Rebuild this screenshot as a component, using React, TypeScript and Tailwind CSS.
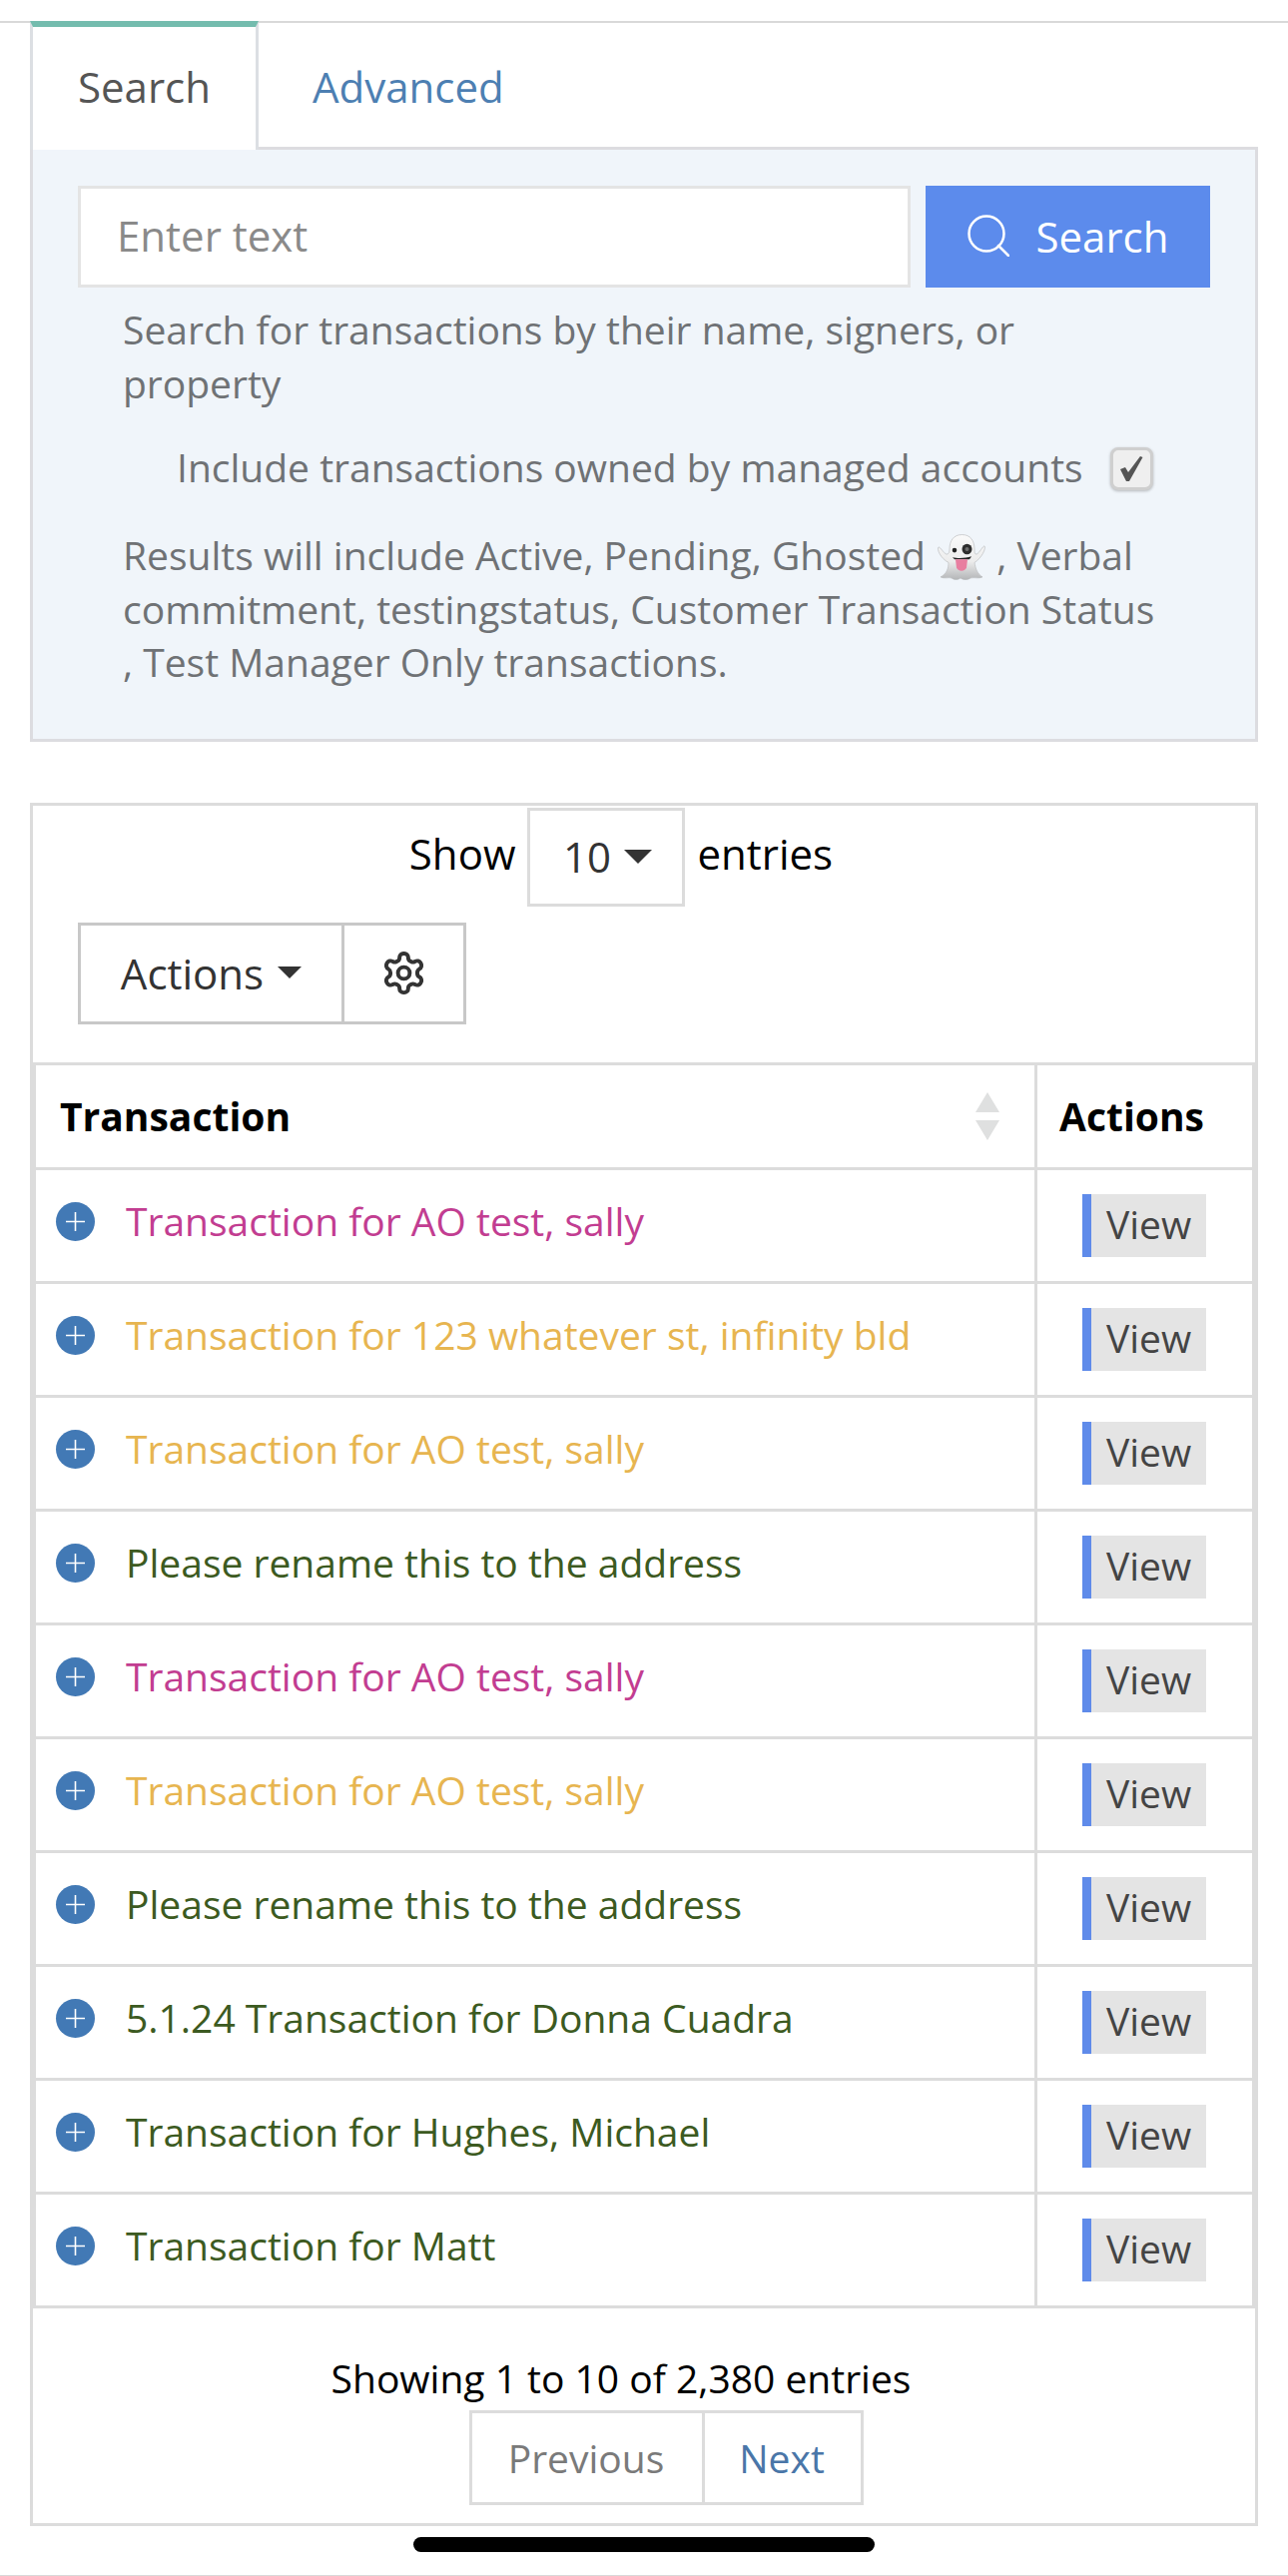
const font = { fontFamily: '"Open Sans", sans-serif' };

const rows: { label: string; color: string }[] = [
  { label: "Transaction for AO test, sally", color: "text-[#c23d91]" },
  { label: "Transaction for 123 whatever st, infinity bld", color: "text-[#e7b550]" },
  { label: "Transaction for AO test, sally", color: "text-[#e7b550]" },
  { label: "Please rename this to the address", color: "text-[#3c5a21]" },
  { label: "Transaction for AO test, sally", color: "text-[#c23d91]" },
  { label: "Transaction for AO test, sally", color: "text-[#e7b550]" },
  { label: "Please rename this to the address", color: "text-[#3c5a21]" },
  { label: "5.1.24 Transaction for Donna Cuadra", color: "text-[#3c5a21]" },
  { label: "Transaction for Hughes, Michael", color: "text-[#3c5a21]" },
  { label: "Transaction for Matt", color: "text-[#3c5a21]" },
];

function Ghost() {
  return (
    <svg width="49" height="46" viewBox="-1 -0.5 49 44.5" preserveAspectRatio="none" className="inline-block align-[-10px] mx-[1px]">
      <defs>
        <linearGradient id="ghostFill" x1="0" y1="0" x2="0" y2="1">
          <stop offset="0" stopColor="#fafafa" />
          <stop offset="0.6" stopColor="#ececec" />
          <stop offset="1" stopColor="#b4b6b8" />
        </linearGradient>
      </defs>
      <path
        d="M24.5 0C16 0 12 6 12 14c0 3-1 5-3 5-3-1-6-7-8-7-2 2 2 11 10 15 0 6-2 11-8 14 4 2 8 0 11 1 3 2 6 2 9 0 3 2 7 2 10 0 4-1 8 1 12-1-5-3-7-8-8-14 7-4 12-14 10-16-2 0-5 7-8 8-2 0-2-2-2-5 0-8-4-14-12.500-14z"
        fill="url(#ghostFill)"
        stroke="#b5b6b8"
        strokeWidth="0.6"
      />
      <circle cx="17" cy="15" r="2.3" fill="#222" />
      <circle cx="29.500" cy="14" r="5" fill="#2e2e2e" />
      <circle cx="29.500" cy="14" r="2" fill="#6f6f6f" />
      <path d="M15 22c5 1 13 1 19-1-1 2-2 3-3 3H18c-1 0-2-1-3-2z" fill="#222" />
      <path d="M18 24h12l-1 8c-1 4-9 4-10 0z" fill="#e87ea0" />
    </svg>
  );
}

function SortArrows() {
  return (
    <svg width="28" height="50" viewBox="0 0 28 50">
      <path d="M14 1l12 20H2z" fill="#dfe0e0" />
      <path d="M14 49L2 29h24z" fill="#dfe0e0" />
    </svg>
  );
}

function Caret({ w = 28, h = 14 }: { w?: number; h?: number }) {
  return (
    <svg width={w} height={h} viewBox="0 0 28 14">
      <path d="M0 0h28L14 14z" fill="#333" />
    </svg>
  );
}

function Gear() {
  return (
    <svg width="47" height="47" viewBox="0 0 24 24" fill="none" stroke="#333" strokeWidth="2" strokeLinecap="round" strokeLinejoin="round">
      <path d="M12.22 2h-.44a2 2 0 0 0-2 2v.18a2 2 0 0 1-1 1.730l-.43.25a2 2 0 0 1-2 0l-.15-.08a2 2 0 0 0-2.730.73l-.22.38a2 2 0 0 0 .73 2.730l.15.1a2 2 0 0 1 1 1.720v.51a2 2 0 0 1-1 1.740l-.15.09a2 2 0 0 0-.73 2.730l.22.38a2 2 0 0 0 2.730.73l.15-.08a2 2 0 0 1 2 0l.43.25a2 2 0 0 1 1 1.730V20a2 2 0 0 0 2 2h.44a2 2 0 0 0 2-2v-.18a2 2 0 0 1 1-1.730l.43-.25a2 2 0 0 1 2 0l.15.08a2 2 0 0 0 2.730-.73l.22-.39a2 2 0 0 0-.73-2.730l-.15-.08a2 2 0 0 1-1-1.740v-.5a2 2 0 0 1 1-1.740l.15-.09a2 2 0 0 0 .73-2.730l-.22-.38a2 2 0 0 0-2.730-.73l-.15.08a2 2 0 0 1-2 0l-.43-.25a2 2 0 0 1-1-1.730V4a2 2 0 0 0-2-2z" />
      <circle cx="12" cy="12" r="3" />
    </svg>
  );
}

function Row({ label, color }: { label: string; color: string }) {
  return (
    <div className="flex h-[114px] border-b-[3px] border-[#dcdcdc]">
      <div className="flex-1 flex items-start pt-[32px] pl-[20px]">
        <span className="w-[39px] h-[39px] rounded-full bg-[#4279b5] flex items-center justify-center shrink-0">
          <svg width="21" height="21" viewBox="0 0 21 21">
            <path d="M10.5 1v19M1 10.5h19" stroke="#fff" strokeWidth="1.6" />
          </svg>
        </span>
        <span className={`ml-[31px] -mt-[8px] leading-[54px] ${color}`}>{label}</span>
      </div>
      <div className="w-[218px] border-l-[3px] border-[#dcdcdc] pl-[45px] pt-[24px]">
        <div className="w-[124px] h-[63px] bg-[#e4e4e4] border-l-[9px] border-[#5f8bea] flex items-center justify-center text-[#444] pb-[3px]">
          View
        </div>
      </div>
    </div>
  );
}

export default function App() {
  return (
    <div style={font} className="w-[1290px] h-[2580px] bg-white text-[39px] relative overflow-hidden">
      <div className="h-[21px]" />
      <div className="border-t-2 border-[#d9d9d9] h-0" />
      <div className="px-[30px] -mt-[2px]">
        <div className="flex h-[126px] text-[42px]">
          <div className="w-[229px] h-[129px] bg-white border-t-[6px] border-t-[#74bcae] border-x-[3px] border-x-[#dcdfe3] pl-[45px] pt-[33px] leading-[54px] text-[#555] relative z-10">
            Search
          </div>
          <div className="pl-[54px] pt-[39px] leading-[54px] text-[#4d7fb2]">Advanced</div>
        </div>
        <div className="h-[596px] bg-[#f0f5fa] border-[3px] border-[#dcdce0] pt-[36px] px-[45px] text-[#6f7275]">
          <div className="flex gap-[15px] h-[102px] text-[42px]">
            <div className="flex-1 bg-white border-[3px] border-[#e4e4e4] flex items-center pl-[36px] pb-[3px] text-[#8a8a8a]">
              Enter text
            </div>
            <div className="w-[285px] bg-[#5c8bec] flex items-center justify-center text-white gap-[27px] pb-[2px]">
              <svg width="42" height="42" viewBox="0 0 42 42" fill="none" stroke="#fff" strokeWidth="2.5">
                <circle cx="19" cy="19" r="17.500" />
                <path d="M31 31l10 10" strokeLinecap="round" />
              </svg>
              <span>Search</span>
            </div>
          </div>
          <div className="pl-[45px] pr-[52px]">
            <p className="mt-[15px] leading-[53.5px]">Search for transactions by their name, signers, or property</p>
          </div>
          <div className="mt-[21px] pl-[99px] flex items-center h-[76px]">
            <span className="-mt-[1px]">Include transactions owned by managed accounts</span>
            <span className="ml-[27px] w-[43px] h-[43px] rounded-[8px] border-[3px] border-[#cfcfcf] bg-[#efefef] flex items-center justify-center shadow-[0_1px_3px_rgba(0,0,0,0.25)]">
              <svg width="26" height="27" viewBox="0 0 26 27">
                <path d="M2 14l5-2 3 5L22 1l2.500 1L11 26H8z" fill="#555" />
              </svg>
            </span>
          </div>
          <div className="pl-[45px] pr-[52px]">
            <p className="mt-[22px] leading-[53.5px]">
              Results will include Active, Pending, Ghosted <Ghost /> , Verbal commitment, testingstatus, Customer Transaction Status , Test Manager Only transactions.
            </p>
          </div>
        </div>

        <div className="mt-[61px] h-[1726px] border-[3px] border-[#dcdcdc] text-black">
          <div className="h-[117px] flex justify-center -ml-[46px] pt-[2px] text-[42px]">
            <span className="leading-[92px] mr-[12px]">Show</span>
            <div className="w-[158px] h-[99px] border-[3px] border-[#dcdcdc] flex items-center justify-center gap-[13px] text-[#333] bg-white pl-[2px] pb-[2px]">
              10 <Caret />
            </div>
            <span className="leading-[92px] ml-[12px]">entries</span>
          </div>
          <div className="pl-[45px] h-[140px] text-[42px]">
            <div className="inline-flex h-[102px] border-[3px] border-[#c8c8c8] text-[#333]">
              <div className="w-[261px] flex items-center justify-center gap-[14px] pb-[2px]">
                Actions <Caret w={24} h={12} />
              </div>
              <div className="w-[122px] border-l-[3px] border-[#c8c8c8] flex items-center justify-center pb-[2px]">
                <Gear />
              </div>
            </div>
          </div>
          <div className="border-t-[3px] border-x-[3px] border-[#dcdcdc]">
            <div className="flex h-[105px] border-b-[3px] border-[#dcdcdc] font-bold">
              <div className="flex-1 flex items-center justify-between pl-[24px] pr-[33px]">
                <span>Transaction</span>
                <SortArrows />
              </div>
              <div className="w-[218px] border-l-[3px] border-[#dcdcdc] pl-[22px] flex items-center">Actions</div>
            </div>
            {rows.map((r, i) => (
              <Row key={i} label={r.label} color={r.color} />
            ))}
          </div>
          <div className="flex flex-col items-center">
            <div className="mt-[43px] leading-[54px] -ml-[46px]">Showing 1 to 10 of 2,380 entries</div>
            <div className="flex h-[95px] border-[3px] border-[#dcdcdc] ml-[45px] mt-[5px]">
              <div className="w-[230px] flex items-center justify-center text-[#7a7a7a] pt-[2px] pr-[2px]">Previous</div>
              <div className="w-[159px] border-l-[3px] border-[#dcdcdc] flex items-center justify-center text-[#4a76a8] pt-[2px] pr-[2px]">Next</div>
            </div>
          </div>
        </div>
        <div className="mt-[11px] mx-auto w-[462px] h-[15px] rounded-full bg-black" />
      </div>
      <div className="absolute left-0 right-0 bottom-0 h-[1px] bg-[#d9d9d9]" />
    </div>
  );
}
